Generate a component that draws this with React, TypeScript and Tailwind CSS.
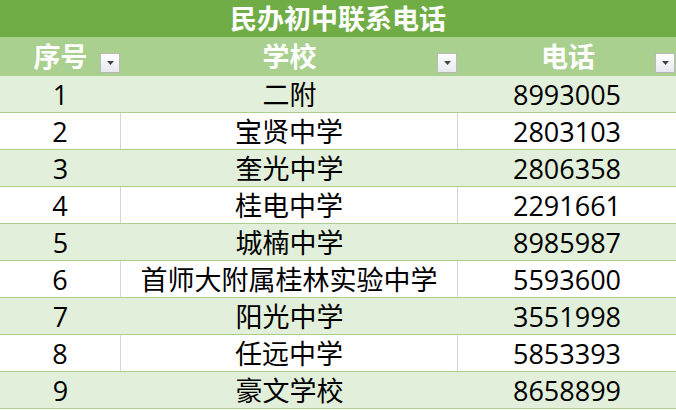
import React from "react";

const rows = [
  ["1", "二附", "8993005"],
  ["2", "宝贤中学", "2803103"],
  ["3", "奎光中学", "2806358"],
  ["4", "桂电中学", "2291661"],
  ["5", "城楠中学", "8985987"],
  ["6", "首师大附属桂林实验中学", "5593600"],
  ["7", "阳光中学", "3551998"],
  ["8", "任远中学", "5853393"],
  ["9", "豪文学校", "8658899"],
];

function FilterButton() {
  return (
    <span className="absolute right-[1px] bottom-[3px] w-[20px] h-[20px] border border-[#b9b9b9] bg-gradient-to-b from-white to-[#e6e9ef] flex items-center justify-center">
      <svg width="7" height="4" viewBox="0 0 7 4">
        <path d="M0 0h7L3.5 4z" fill="#444" />
      </svg>
    </span>
  );
}

export default function App() {
  return (
    <div
      className="w-[676px] h-[410px] bg-white overflow-hidden text-black"
      style={{ fontFamily: '"Open Sans", "Noto Sans CJK SC", sans-serif' }}
    >
      <div className="h-[37px] bg-[#70ad47] flex items-center justify-center text-white font-bold text-[27px] leading-none">
        民办初中联系电话
      </div>
      <div className="h-[39px] bg-[#a9d08e] grid grid-cols-[121px_337px_218px] text-white font-bold text-[27px] leading-none">
        <div className="relative flex items-center justify-center">
          序号
          <FilterButton />
        </div>
        <div className="relative flex items-center justify-center">
          学校
          <FilterButton />
        </div>
        <div className="relative flex items-center justify-center pl-[2px]">
          电话
          <FilterButton />
        </div>
      </div>
      {rows.map((r, i) => {
        const banded = i % 2 === 0;
        return (
          <div
            key={r[0]}
            className={
              "h-[37px] border-b border-[#a9d08e] grid grid-cols-[121px_337px_218px] text-[27px] leading-none " +
              (banded ? "bg-[#e2efda]" : "bg-white")
            }
          >
            <div className={"flex items-center justify-center " + (banded ? "" : "border-r border-[#d4d4d4]")}>
              {r[0]}
            </div>
            <div className={"flex items-center justify-center " + (banded ? "" : "border-r border-[#d4d4d4]")}>
              {r[1]}
            </div>
            <div className="flex items-center justify-center">{r[2]}</div>
          </div>
        );
      })}
    </div>
  );
}
